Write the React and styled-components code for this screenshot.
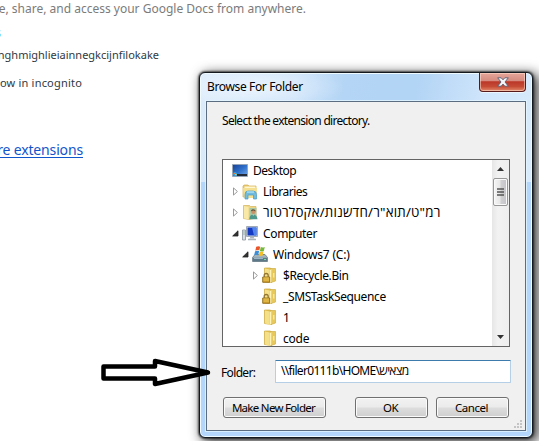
import React from "react";
import styled, { createGlobalStyle } from "styled-components";

const Global = createGlobalStyle`
  * { box-sizing: border-box; }
  body { margin: 0; background: #fff; overflow: hidden; }
`;

const ui = `"Noto Sans", "Open Sans", "Liberation Sans", sans-serif`;

const Page = styled.main`
  position: relative;
  width: 539px;
  height: 441px;
  overflow: hidden;
  background: #fff;
  font-family: ${ui};
  font-size: 12px;
  color: #000;
`;

const Details = styled.section`
  display: flex;
  flex-direction: column;
  width: 308px;
`;

const Line = styled.div`
  display: flex;
  justify-content: flex-end;
  white-space: nowrap;
  width: ${(p) => p.$end}px;
  height: ${(p) => p.$h}px;
  line-height: 18px;
  font-size: ${(p) => p.$size || 12}px;
  color: ${(p) => p.$color || "#303942"};
  letter-spacing: ${(p) => p.$track || 0}px;
`;

const MoreLink = styled.a`
  display: block;
  height: 17px;
  margin-top: 1px;
  color: #1155cc;
  border-bottom: 1px solid #1155cc;
  line-height: 18px;
`;

const Dialog = styled.section`
  position: absolute;
  left: 199px;
  top: 72px;
  width: 334px;
  height: 366px;
  padding: 0 6px 6px;
  border: 1px solid #14191f;
  border-radius: 6px;
  background:
    radial-gradient(ellipse 90px 22px at 55px 14px, rgba(255,255,255,.55), transparent),
    linear-gradient(100deg, #dcebfb 0, #cce3fa 28%, #b4d5f5 42%, #b2d4f5 62%, #cfe5fb 82%, #d9ebfc 100%) top / 100% 109px no-repeat,
    #b3d6fa;
  box-shadow:
    inset 0 0 0 1px #effaff,
    0 0 2px 1px rgba(0,0,0,.6),
    4px 3px 12px 2px rgba(0,0,0,.72);
`;

const TitleBar = styled.header`
  display: flex;
  justify-content: space-between;
  height: 28px;
  padding-left: 1px;
`;

const Title = styled.h1`
  margin: 0;
  font-size: 12px;
  font-weight: 400;
  line-height: 28px;
  letter-spacing: -0.36px;
`;

const CloseButton = styled.button`
  display: flex;
  align-items: center;
  justify-content: center;
  width: 47px;
  height: 19px;
  padding: 0;
  border: 1px solid #58191b;
  border-top: 0;
  border-radius: 0 0 4px 4px;
  box-shadow: inset 0 0 0 1px rgba(255,225,210,.55), 0 1px 0 rgba(255,255,255,.6);
  background: linear-gradient(#e5a69b 0, #d58a7e 45%, #bb3729 48%, #c64b35 75%, #e18a6d 100%);
`;

const Client = styled.div`
  display: flex;
  flex-direction: column;
  height: 330px;
  padding: 0 0 0 15px;
  border: 1px solid #5b6d80;
  box-shadow: 0 0 0 1px rgba(228,245,255,.8);
  background: #f0f0f0;
`;

const Prompt = styled.p`
  margin: 9px 0 0;
  height: 48px;
  line-height: 19px;
  font-size: 12px;
  letter-spacing: ${(p) => p.$track}px;
`;

const TreeBox = styled.div`
  display: flex;
  width: 288px;
  height: 188px;
  border: 1px solid #646464;
  background: #fff;
  overflow: hidden;
`;

const Tree = styled.div`
  display: flex;
  flex-direction: column;
  flex: 1;
`;

const TreeRow = styled.div`
  display: flex;
  align-items: center;
  flex: 0 0 21px;
  padding-left: ${(p) => p.$depth * 10 - 2}px;
  white-space: nowrap;
`;

const Slot = styled.span`
  display: flex;
  align-items: center;
  justify-content: flex-start;
  padding-left: 1px;
  width: ${(p) => (p.$root ? 9 : 11)}px;
  height: 16px;
  svg { display: block; }
`;

const Label = styled.span`
  margin-left: ${(p) => p.$gap || 5}px;
  line-height: 21px;
  font-size: ${(p) => p.$size || 12}px;
  letter-spacing: ${(p) => p.$track || 0}px;
`;

const ScrollBar = styled.div`
  display: flex;
  flex-direction: column;
  align-items: center;
  width: 17px;
  background: linear-gradient(90deg, #e6e6e6, #f2f2f2 35%, #eee);
`;

const ScrollArrow = styled.div`
  display: flex;
  align-items: center;
  justify-content: center;
  height: 18px;
`;

const Thumb = styled.div`
  display: flex;
  align-items: center;
  justify-content: center;
  width: 15px;
  height: 28px;
  border: 1px solid #979797;
  border-radius: 2px;
  box-shadow: inset 0 0 0 1px #fafafa;
  background: linear-gradient(90deg, #f5f5f5, #e6e6e6 48%, #d0d0d3 52%, #c4c4c8);
`;

const ScrollFill = styled.div`
  flex: 1;
`;

const FolderRow = styled.label`
  display: flex;
  align-items: center;
  height: 24px;
  margin-top: 12px;
`;

const FolderCaption = styled.span`
  width: 54px;
  font-size: 12px;
  line-height: 24px;
  padding-top: 3px;
  margin-left: -1px;
  letter-spacing: -0.65px;
`;

const FolderField = styled.div`
  display: flex;
  align-items: center;
  width: 236px;
  height: 23px;
  padding: 0 0 2px 5px;
  border: 1px solid #b5cfe7;
  border-top-color: #3d7bad;
  border-radius: 1px;
  background: #fff;
  white-space: pre;
  font-size: 12px;
  letter-spacing: ${(p) => p.$track}px;
`;

const Buttons = styled.footer`
  display: flex;
  margin-top: 14px;
  padding-left: 1px;
`;

const PushButton = styled.button`
  width: ${(p) => p.$w}px;
  height: 21px;
  margin-right: ${(p) => p.$after || 0}px;
  padding: 1px 2px 0 0;
  border: 1px solid #707070;
  border-radius: 3px;
  background: linear-gradient(#f2f2f2, #ebebeb 48%, #dddddd 52%, #cfcfcf);
  box-shadow: inset 0 0 0 1px #fbfbfb;
  color: #000;
  font: 11.5px/18px ${ui};
  white-space: nowrap;
  letter-spacing: ${(p) => p.$track || 0}px;
`;

const Grip = styled.svg`
  align-self: flex-end;
  display: block;
  margin: 2px 3px 0 0;
`;

const Pointer = styled.svg`
  position: absolute;
  left: 98px;
  top: 355px;
`;

function Expander({ state, root }) {
  return (
    <Slot $root={root}>
      {state === "closed" && (
        <svg width="7" height="9" viewBox="0 0 7 9">
          <path d="M1.5 .9v7.2L5.4 4.5z" fill="#fff" stroke="#9a9a9a" />
        </svg>
      )}
      {state === "open" && (
        <svg width="7" height="7" viewBox="0 0 7 7">
          <path d="M6 .8V6H.7z" fill="#333" stroke="#222" strokeWidth=".8" />
        </svg>
      )}
    </Slot>
  );
}

function FolderShape() {
  return (
    <g>
      <path d="M2.5 1h6l1 1v13.5l-7-1z" fill="#e3c255" stroke="#cdaa3f" strokeWidth=".7" />
      <path d="M8.5 1.5h5V14l-4.5 1.5z" fill="#e6c85c" stroke="#cfae48" strokeWidth=".7" />
      <path d="M3 1.5l4.5 1V16L3 14.3z" fill="#f5e08a" />
      <path d="M7.8 3l1.5-.8v12.3L7.8 16z" fill="#fff3b8" />
      <path d="M11.8 6v4.5" stroke="#fff4cc" />
    </g>
  );
}

function WindowsFlag() {
  return (
    <g>
      <path d="M4.2 .8c1.5-.9 2.7-.8 4-.1L7.3 4.6c-1.3-.7-2.6-.6-4 .1z" fill="#e9552c" />
      <path d="M8.8 1c1.4.7 2.6.6 4-.1l-1 4c-1.3.7-2.6.7-3.9 0z" fill="#75b83b" />
      <path d="M3.1 5.3c1.4-.7 2.7-.8 4-.1l-1 4c-1.3-.7-2.6-.7-4 .1z" fill="#3b8ed8" />
      <path d="M7.7 5.4c1.3.7 2.5.7 3.9.1l-1 3.9c-1.3.7-2.6.6-3.9 0z" fill="#f6bd27" />
    </g>
  );
}

function ItemIcon({ kind }) {
  return (
    <svg width="16" height="17" viewBox="0 0 16 17">
      {kind === "desktop" && (
        <g>
          <defs>
            <linearGradient id="screen" x2="1" y2="1">
              <stop stopColor="#173f91" />
              <stop offset=".5" stopColor="#2f70cb" />
              <stop offset="1" stopColor="#78abe7" />
            </linearGradient>
          </defs>
          <path d="M.5 2.5h15v12H.5z" fill="url(#screen)" stroke="#97a6b8" />
          <path d="M5 12h10v2H5z" fill="#232c38" />
          <circle cx="3" cy="12" r="2" fill="#31a5d8" />
          <path d="M2 11h1v1H2z" fill="#f17d3c" />
          <path d="M3.3 12h1.3v1.2H3.3z" fill="#f7dc43" />
        </g>
      )}
      {kind === "libraries" && (
        <g>
          <path d="M1 3l1-1h4l1 1h7v11H1z" fill="#e8ca6e" stroke="#d3b057" strokeWidth=".7" />
          <path d="M2.5 3.5h11v4h-11z" fill="#fff7d3" />
          <path d="M1 5h14l-1 10H2z" fill="#f5df91" />
          <path d="M3 16v-4.5Q3 8 6 8h5q3.5 0 3.5 3.5V16h-3v-4H6v4z" fill="#71bcde" stroke="#4a9bc6" strokeWidth=".7" />
          <path d="M5 9h7" stroke="#c7eefb" />
        </g>
      )}
      {kind === "user" && (
        <g>
          <path d="M1.5 1.5h6l1 1H14V14l-7 1.5-5.5-1z" fill="#eed583" stroke="#d3b35c" strokeWidth=".7" />
          <path d="M2 2l4.5 1v12.5L2 14.3z" fill="#f8e9a8" />
          <path d="M7.5 4h7v10h-7z" fill="#a9c9a6" />
          <circle cx="11.3" cy="7.8" r="2.2" fill="#c79366" />
          <path d="M8.8 7.2Q9.8 4 13.2 6.1l.4 1.3-2-1z" fill="#62503b" />
          <path d="M7.3 15.3q.2-4.7 4-4.7t4.2 4.7z" fill="#4d9a8c" />
          <path d="M10.3 10.4l1 1.3 1.2-1.3" fill="#f4d9b8" />
        </g>
      )}
      {kind === "computer" && (
        <g>
          <path d="M.5 5h3v10h-3z" fill="#d9dfe5" stroke="#8c969e" strokeWidth=".8" />
          <path d="M1.5 7h1m-1 2h1" stroke="#5c8b69" />
          <path d="M4.5 1.5h11v10h-11z" fill="#dae1e9" stroke="#8d99a6" strokeWidth=".8" />
          <path d="M5.5 2.5h9v8h-9z" fill="#1439c2" />
          <path d="M10 2.5h4.5v8H12z" fill="#5285ec" />
          <path d="M8.5 11.5h3l1 2h-5z" fill="#adb6bf" />
          <path d="M6 14.5h8" stroke="#aab4bc" strokeWidth="1.5" />
        </g>
      )}
      {kind === "drive" && (
        <g>
          <path d="M3 8.5h10l2.5 3v4H.5v-4z" fill="#a3b3bc" stroke="#687a86" strokeWidth=".8" />
          <path d="M1 11.8h14v3.5H1z" fill="#5d7888" />
          <path d="M2 12.5h9" stroke="#9bb8c6" />
          <path d="M12 13h2v1h-2z" fill="#75e3a0" />
          <WindowsFlag />
        </g>
      )}
      {(kind === "folder" || kind === "locked") && <FolderShape />}
      {kind === "locked" && (
        <g>
          <path d="M2.2 10V8.5a2 2 0 0 1 4 0V10" fill="none" stroke="#947633" strokeWidth="1.3" />
          <path d="M.7 10h7v5.3h-7z" fill="#d4a32e" stroke="#8f6b18" strokeWidth=".9" />
          <path d="M1.5 11h5.5M1.5 13h5.5" stroke="#f3d56d" strokeWidth=".7" />
        </g>
      )}
    </svg>
  );
}

const items = [
  { label: "Desktop", kind: "desktop", depth: 0, track: -0.5 },
  { label: "Libraries", kind: "libraries", depth: 1, state: "closed", track: -0.5 },
  { label: 'רמ"ט/תוא"ר/חדשנות/אקסלרטור', kind: "user", depth: 1, state: "closed", size: 13.3, track: 0.2 },
  { label: "Computer", kind: "computer", depth: 1, state: "open", track: -0.35 },
  { label: "Windows7 (C:)", kind: "drive", depth: 2, state: "open", track: -0.2 },
  { label: "$Recycle.Bin", kind: "locked", depth: 3, state: "closed", track: -0.38 },
  { label: "_SMSTaskSequence", kind: "locked", depth: 3, track: -0.38 },
  { label: "1", kind: "folder", depth: 3 },
  { label: "code", kind: "folder", depth: 3, track: -0.2 },
];

export default function App() {
  return (
    <Page>
      <Global />
      <Details>
        <Line $end={306} $h={24} $size={12} $color="#7b7b7b">e, share, and access your Google Docs from anywhere.</Line>
        <Line $end={1} $h={22} $color="#58b7e8">s</Line>
        <Line $end={159} $h={28} $size={11}>nghmighlieiainnegkcijnfilokake</Line>
        <Line $end={82} $h={66} $size={11} $track={0.2}>ow in incognito</Line>
        <Line $end={83} $h={20} $size={14} $track={-0.15}><MoreLink>re extensions</MoreLink></Line>
      </Details>
      <Dialog>
        <TitleBar>
          <Title>Browse For Folder</Title>
          <CloseButton aria-label="Close">
            <svg width="12" height="10" viewBox="0 0 12 10">
              <path d="M.7.8h3.5L6 2.8 7.8.8h3.5L8 5l3.3 4.2H7.8L6 7.1 4.2 9.2H.7L4 5z" fill="#f5f5f8" stroke="#575b70" strokeWidth=".9" />
            </svg>
          </CloseButton>
        </TitleBar>
        <Client>
          <Prompt $track={-0.7}>Select the extension directory.</Prompt>
          <TreeBox>
            <Tree>
              {items.map((it) => (
                <TreeRow key={it.label} $depth={it.depth}>
                  <Expander state={it.state} root={it.depth === 0} />
                  <ItemIcon kind={it.kind} />
                  <Label $track={it.track} $size={it.size}>{it.label}</Label>
                </TreeRow>
              ))}
            </Tree>
            <ScrollBar>
              <ScrollArrow><svg width="7" height="4"><path d="M0 4l3.5-4L7 4z" fill="#333" /></svg></ScrollArrow>
              <Thumb>
                <svg width="8" height="9"><path d="M0 1h7M0 4h7M0 7h7" stroke="#555" strokeWidth="1.4" /></svg>
              </Thumb>
              <ScrollFill />
              <ScrollArrow><svg width="7" height="4"><path d="M0 0l3.5 4L7 0z" fill="#333" /></svg></ScrollArrow>
            </ScrollBar>
          </TreeBox>
          <FolderRow>
            <FolderCaption>Folder:</FolderCaption>
            <FolderField $track={-0.68}>{"\\\\filer0111b\\HOME\\מצאיש"}</FolderField>
          </FolderRow>
          <Buttons>
            <PushButton $w={103} $after={29} $track={-0.7}>Make New Folder</PushButton>
            <PushButton $w={73} $after={8} $track={-0.5}>OK</PushButton>
            <PushButton $w={73} $track={-0.5}>Cancel</PushButton>
          </Buttons>
          <Grip width="8" height="8">
            <path d="M6 0h2v2H6zM3 3h2v2H3zM6 3h2v2H6zM0 6h2v2H0zM3 6h2v2H3zM6 6h2v2H6z" fill="#c4c4c4" />
          </Grip>
        </Client>
      </Dialog>
      <Pointer width="114" height="36" viewBox="0 0 114 36">
        <path d="M5.5 11.5H57V6L110 17.5 57 29v-5.5H5.5z" fill="#fff" stroke="#000" strokeWidth="4.5" strokeLinejoin="round" />
      </Pointer>
    </Page>
  );
}
